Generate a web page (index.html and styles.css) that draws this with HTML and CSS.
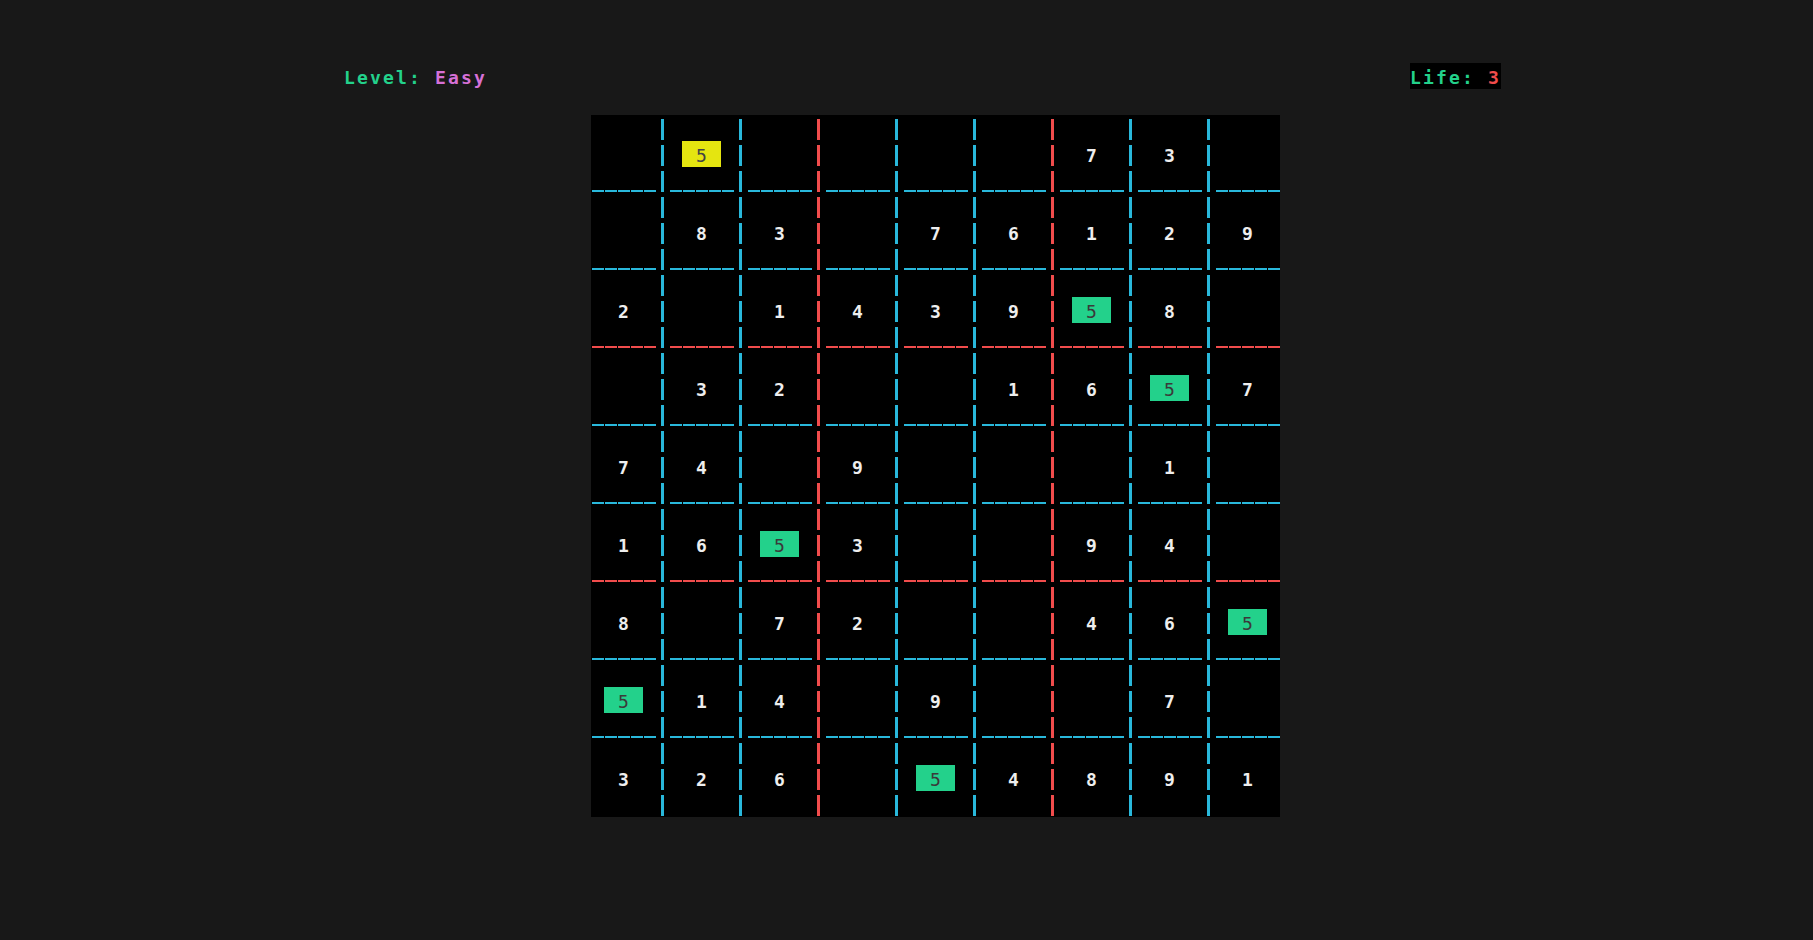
FILE: index.html
```html
<!DOCTYPE html>
<html lang="en">
<head>
<meta charset="utf-8">
<title>Sudoku</title>
<link rel="stylesheet" href="styles.css">
</head>
<body>
<div class="screen">
  <div class="header">
    <div class="level"><span class="g">Level:</span> <span class="m">Easy</span></div>
    <div class="life"><span class="g">Life:</span> <span class="r">3</span></div>
  </div>
  <div class="board">
    <!-- row 1 -->
    <div class="c"></div>
    <div class="c"><span class="v sel">5</span></div>
    <div class="c bx"></div>
    <div class="c"></div>
    <div class="c"></div>
    <div class="c bx"></div>
    <div class="c"><span class="v">7</span></div>
    <div class="c"><span class="v">3</span></div>
    <div class="c nl"></div>
    <!-- row 2 -->
    <div class="c"></div>
    <div class="c"><span class="v">8</span></div>
    <div class="c bx"><span class="v">3</span></div>
    <div class="c"></div>
    <div class="c"><span class="v">7</span></div>
    <div class="c bx"><span class="v">6</span></div>
    <div class="c"><span class="v">1</span></div>
    <div class="c"><span class="v">2</span></div>
    <div class="c nl"><span class="v">9</span></div>
    <!-- row 3 -->
    <div class="c by"><span class="v">2</span></div>
    <div class="c by"></div>
    <div class="c by bx"><span class="v">1</span></div>
    <div class="c by"><span class="v">4</span></div>
    <div class="c by"><span class="v">3</span></div>
    <div class="c by bx"><span class="v">9</span></div>
    <div class="c by"><span class="v ok">5</span></div>
    <div class="c by"><span class="v">8</span></div>
    <div class="c by nl"></div>
    <!-- row 4 -->
    <div class="c"></div>
    <div class="c"><span class="v">3</span></div>
    <div class="c bx"><span class="v">2</span></div>
    <div class="c"></div>
    <div class="c"></div>
    <div class="c bx"><span class="v">1</span></div>
    <div class="c"><span class="v">6</span></div>
    <div class="c"><span class="v ok">5</span></div>
    <div class="c nl"><span class="v">7</span></div>
    <!-- row 5 -->
    <div class="c"><span class="v">7</span></div>
    <div class="c"><span class="v">4</span></div>
    <div class="c bx"></div>
    <div class="c"><span class="v">9</span></div>
    <div class="c"></div>
    <div class="c bx"></div>
    <div class="c"></div>
    <div class="c"><span class="v">1</span></div>
    <div class="c nl"></div>
    <!-- row 6 -->
    <div class="c by"><span class="v">1</span></div>
    <div class="c by"><span class="v">6</span></div>
    <div class="c by bx"><span class="v ok">5</span></div>
    <div class="c by"><span class="v">3</span></div>
    <div class="c by"></div>
    <div class="c by bx"></div>
    <div class="c by"><span class="v">9</span></div>
    <div class="c by"><span class="v">4</span></div>
    <div class="c by nl"></div>
    <!-- row 7 -->
    <div class="c"><span class="v">8</span></div>
    <div class="c"></div>
    <div class="c bx"><span class="v">7</span></div>
    <div class="c"><span class="v">2</span></div>
    <div class="c"></div>
    <div class="c bx"></div>
    <div class="c"><span class="v">4</span></div>
    <div class="c"><span class="v">6</span></div>
    <div class="c nl"><span class="v ok">5</span></div>
    <!-- row 8 -->
    <div class="c"><span class="v ok">5</span></div>
    <div class="c"><span class="v">1</span></div>
    <div class="c bx"><span class="v">4</span></div>
    <div class="c"></div>
    <div class="c"><span class="v">9</span></div>
    <div class="c bx"></div>
    <div class="c"></div>
    <div class="c"><span class="v">7</span></div>
    <div class="c nl"></div>
    <!-- row 9 -->
    <div class="c nb"><span class="v">3</span></div>
    <div class="c nb"><span class="v">2</span></div>
    <div class="c nb bx"><span class="v">6</span></div>
    <div class="c nb"></div>
    <div class="c nb"><span class="v ok">5</span></div>
    <div class="c nb bx"><span class="v">4</span></div>
    <div class="c nb"><span class="v">8</span></div>
    <div class="c nb"><span class="v">9</span></div>
    <div class="c nb nl"><span class="v">1</span></div>
  </div>
</div>
</body>
</html>
```

FILE: styles.css
```css
html, body {
  margin: 0;
  padding: 0;
  background: #181818;
}

body {
  font-family: "DejaVu Sans Mono", "Liberation Mono", monospace;
  font-size: 18px;
  color: #e5e5e5;
}

.screen {
  padding: 63px 0 0 344px;
}

.header {
  display: flex;
  justify-content: space-between;
  width: 1157px;
  height: 26px;
  margin-bottom: 26px;
  font-weight: bold;
  letter-spacing: 2.16px;
  line-height: 29px;
  white-space: pre;
}

.level,
.life {
  height: 26px;
  overflow: visible;
}

.life {
  background: #000;
}

.g { color: #23d18b; }
.m { color: #d670d6; }
.r { color: #f14c4c; }

.board {
  margin-left: 247px;
  width: 689px;
  display: grid;
  grid-template-columns: repeat(8, 78px) 65px;
  grid-auto-rows: 78px;
  background: #000;
}

.c {
  --vc: #29b8db;
  --hc: #29b8db;
  box-sizing: border-box;
  padding: 26px 0 0 13px;
  background-image:
    repeating-linear-gradient(to bottom, transparent 0 4px, var(--vc) 4px 25px, transparent 25px 26px),
    repeating-linear-gradient(to right, transparent 0 1px, var(--hc) 1px 13px);
  background-size: 3px 78px, 65px 2px;
  background-position: 70px 0, 0 75px;
  background-repeat: no-repeat, no-repeat;
}

.c.bx { --vc: #f14c4c; }
.c.by { --hc: #f14c4c; }
.c.nl { --vc: transparent; }
.c.nb { --hc: transparent; }

.v {
  display: block;
  width: 39px;
  height: 26px;
  line-height: 29px;
  text-align: center;
  font-weight: bold;
  color: #eeeeee;
}

.v.sel {
  background: #e5e510;
  color: #444444;
  font-weight: normal;
}

.v.ok {
  background: #23d18b;
  color: #3a3a3a;
  font-weight: normal;
}
```
